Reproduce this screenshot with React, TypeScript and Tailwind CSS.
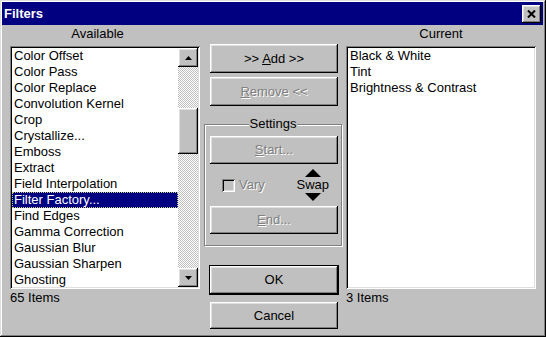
import type { ReactNode } from 'react';

const FONT = "font-['Liberation_Sans',Arial,sans-serif]";

const raised =
  'bg-[#c0c0c0] shadow-[inset_-1px_-1px_#000,inset_1px_1px_#fff,inset_-2px_-2px_#808080,inset_2px_2px_#dfdfdf]';
const sunken =
  'shadow-[inset_1px_1px_#808080,inset_-1px_-1px_#fff,inset_2px_2px_#000,inset_-2px_-2px_#dfdfdf]';
const disabledText = 'text-[#808080] [text-shadow:1px_1px_0_#fff]';

const AVAILABLE = [
  'Color Offset',
  'Color Pass',
  'Color Replace',
  'Convolution Kernel',
  'Crop',
  'Crystallize...',
  'Emboss',
  'Extract',
  'Field Interpolation',
  'Filter Factory...',
  'Find Edges',
  'Gamma Correction',
  'Gaussian Blur',
  'Gaussian Sharpen',
  'Ghosting',
];

const CURRENT = ['Black & White', 'Tint', 'Brightness & Contrast'];

function Button({ children, className = '', disabled = false }: { children: ReactNode; className?: string; disabled?: boolean }) {
  return (
    <div
      className={`flex items-center justify-center w-[128px] text-[13px] leading-[16px] ${raised} ${
        disabled ? disabledText : 'text-black'
      } ${className}`}
    >
      {children}
    </div>
  );
}

function Arrow({ down = false }: { down?: boolean }) {
  return (
    <svg width="7" height="4" viewBox="0 0 7 4">
      <polygon points={down ? '0,0 7,0 3.5,4' : '3.5,0 7,4 0,4'} fill="#000" />
    </svg>
  );
}

function ListBox({ items, selected, scroll = false }: { items: string[]; selected?: number; scroll?: boolean }) {
  return (
    <div className={`mt-[4px] flex h-[243px] w-[190px] bg-white p-[2px] ${sunken}`}>
      <div className="flex-1 flex flex-col">
        {items.map((it, i) => (
          <div
            key={it}
            className={`h-[16px] px-[2px] text-[13px] leading-[16px] whitespace-nowrap ${
              i === selected
                ? 'bg-[#000080] text-white outline-1 outline-dotted outline-[#c8c880] -outline-offset-1'
                : 'text-black'
            }`}
          >
            {it}
          </div>
        ))}
      </div>
      {scroll && (
        <div className="flex w-[20px] flex-col">
          <div className={`flex h-[19px] items-center justify-center ${raised}`}>
            <Arrow />
          </div>
          <div className="flex-1 flex flex-col bg-[image:repeating-conic-gradient(#c0c0c0_0%_25%,#fff_0%_50%)] bg-size-[2px_2px]">
            <div className={`mt-[41px] h-[46px] ${raised}`} />
          </div>
          <div className={`flex h-[19px] items-center justify-center ${raised}`}>
            <Arrow down />
          </div>
        </div>
      )}
    </div>
  );
}

export default function App() {
  return (
    <div
      className={`${FONT} flex h-[337px] w-[546px] flex-col bg-[#c0c0c0] pt-[2px] pl-[2px] pr-[3px] pb-[3px] shadow-[inset_-1px_-1px_#000,inset_1px_1px_#dfdfdf,inset_-2px_-2px_#808080,inset_2px_2px_#fff]`}
    >
      {/* title bar */}
      <div className="flex h-[23px] items-center justify-between bg-[#000080] pl-[2px] pr-[2px]">
        <span className="text-[13px] font-bold leading-[16px] text-white">Filters</span>
        <div className={`flex h-[18px] w-[19px] items-center justify-center ${raised}`}>
          <svg width="9" height="8" viewBox="0 0 9 8">
            <path d="M1 0.5 L8 7.5 M8 0.5 L1 7.5" stroke="#000" strokeWidth="2" />
          </svg>
        </div>
      </div>

      <div className="flex flex-row items-start pl-[8px] pt-[1px] text-[13px] leading-[16px] text-black">
        {/* Available */}
        <div className="flex w-[190px] flex-col">
          <div className="h-[16px] w-[175px] text-center">Available</div>
          <ListBox items={AVAILABLE} selected={9} scroll />
          <div className="mt-[1px] h-[16px]">65 Items</div>
        </div>

        {/* middle */}
        <div className="ml-[4px] mt-[18px] flex w-[138px] flex-col">
          <Button className="ml-[6px] h-[29px]">
            &gt;&gt; <u className="mx-[3px]">A</u>
            <span className="-ml-[3px]">dd &gt;&gt;</span>
          </Button>
          <Button className="ml-[6px] mt-[4px] h-[29px]" disabled>
            <u>R</u>emove &lt;&lt;
          </Button>

          <fieldset className="mt-[10px] h-[130px] border border-[#808080] shadow-[1px_1px_#fff,inset_1px_1px_#fff] flex flex-col">
            <legend className="mx-auto bg-[#c0c0c0] px-[1px] leading-[16px]">Settings</legend>
            <Button className="ml-[5px] mt-[4px] h-[28px]" disabled>
              <u>S</u>tart...
            </Button>
            <div className="flex h-[42px] items-center">
              <div className={`ml-[17px] h-[13px] w-[13px] bg-[#c0c0c0] ${sunken}`} />
              <span className={`ml-[4px] ${disabledText}`}>Vary</span>
              <div className="ml-auto mr-[12px] flex flex-col items-center">
                <svg width="16" height="8" viewBox="0 0 16 8">
                  <polygon points="8,0 16,8 0,8" fill="#000" />
                </svg>
                <span className="h-[16px]">Swap</span>
                <svg width="16" height="8" viewBox="0 0 16 8">
                  <polygon points="0,0 16,0 8,8" fill="#000" />
                </svg>
              </div>
            </div>
            <Button className="ml-[5px] h-[28px]" disabled>
              <u>E</u>nd...
            </Button>
          </fieldset>

          <Button className="ml-[6px] mt-[20px] h-[28px] outline outline-1 outline-black">OK</Button>
          <Button className="ml-[6px] mt-[8px] h-[27px]">Cancel</Button>
        </div>

        {/* Current */}
        <div className="ml-[4px] flex w-[190px] flex-col">
          <div className="h-[16px] text-center">Current</div>
          <ListBox items={CURRENT} />
          <div className="mt-[1px] h-[16px]">3 Items</div>
        </div>
      </div>
    </div>
  );
}
